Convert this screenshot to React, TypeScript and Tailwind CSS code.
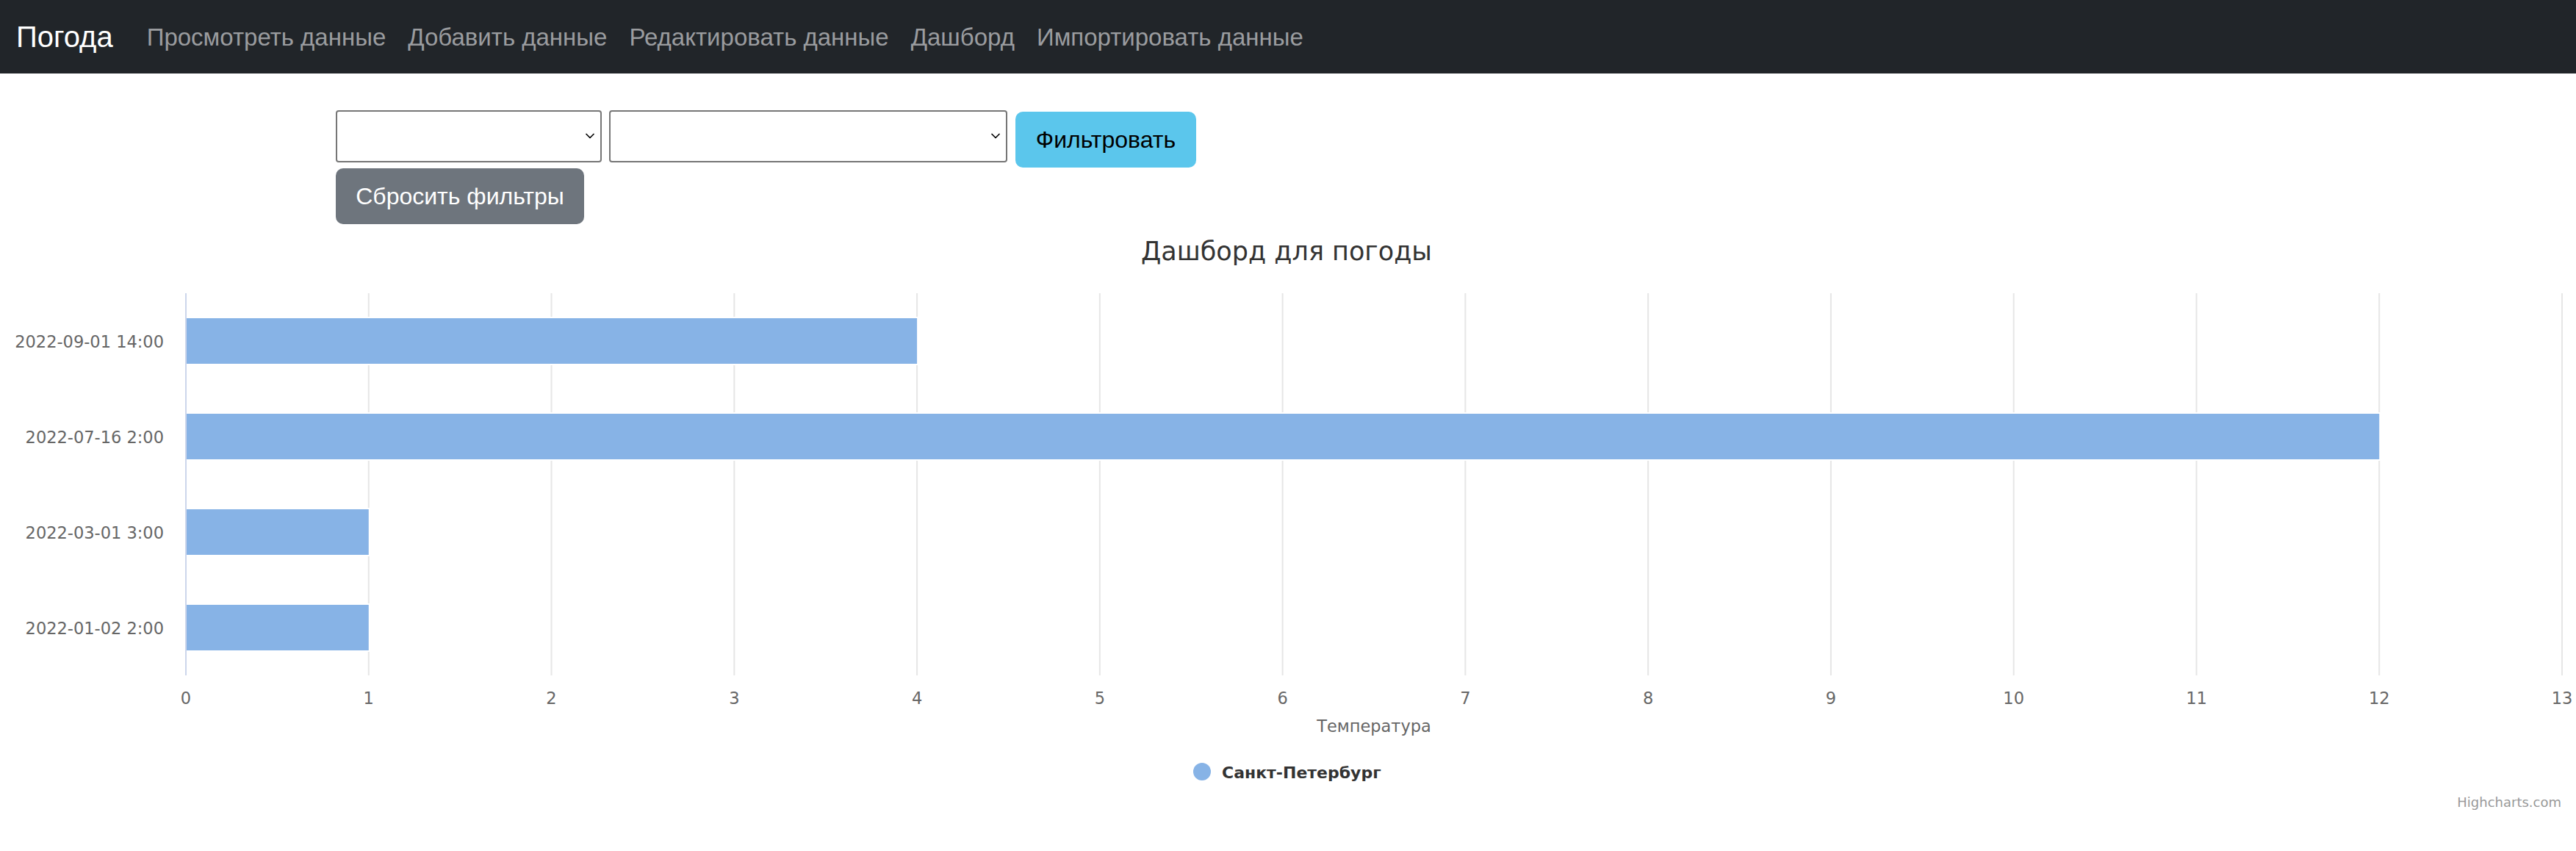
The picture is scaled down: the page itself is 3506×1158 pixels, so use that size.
import { ChevronDown } from 'lucide-react';

const navLinks = ['Просмотреть данные', 'Добавить данные', 'Редактировать данные', 'Дашборд', 'Импортировать данные'];

const rows = [
  { label: '2022-09-01 14:00', value: 4 },
  { label: '2022-07-16 2:00', value: 12 },
  { label: '2022-03-01 3:00', value: 1 },
  { label: '2022-01-02 2:00', value: 1 },
];

// plot geometry, chart coordinates (chart is 3506 x 800)
const PLOT_LEFT = 253;
const PLOT_RIGHT = 3487;
const PLOT_TOP = 94;
const BAND = 130;
const UNIT = (PLOT_RIGHT - PLOT_LEFT) / 13;
const CHART_FONT = '"DejaVu Sans", "Lucida Grande", sans-serif';

function Select({ width }: { width: string }) {
  return (
    <div className={`relative h-[71px] ${width}`}>
      <select className="h-full w-full appearance-none rounded-[4px] border-2 border-[#767676] bg-white" />
      <ChevronDown className="pointer-events-none absolute right-[6px] top-[25px] text-black" size={20} strokeWidth={2} />
    </div>
  );
}

function WeatherChart() {
  const plotBottom = PLOT_TOP + BAND * rows.length;
  const ticks = Array.from({ length: 14 }, (_, i) => i);

  return (
    <svg width="3506" height="800" viewBox="0 0 3506 800" className="block" style={{ fontFamily: CHART_FONT }}>
      <text x="1751" y="49" textAnchor="middle" fontSize="35" fill="#333333">
        Дашборд для погоды
      </text>

      {ticks.slice(1).map((i) => (
        <line key={i} x1={PLOT_LEFT + i * UNIT} x2={PLOT_LEFT + i * UNIT} y1={PLOT_TOP} y2={plotBottom} stroke="#e6e6e6" strokeWidth="2" />
      ))}

      {rows.map((r, i) => {
        const y = PLOT_TOP + i * BAND + 34;
        const w = r.value * UNIT - 1;
        return (
          <g key={r.label}>
            <rect x={PLOT_LEFT + 1} y={y - 2} width={w + 2} height={66} fill="#ffffff" />
            <rect x={PLOT_LEFT + 1} y={y} width={w} height={62} fill="#87b3e6" />
            <text x="223" y={y + 40} textAnchor="end" fontSize="22.5" fill="#666666">
              {r.label}
            </text>
          </g>
        );
      })}

      <line x1={PLOT_LEFT} x2={PLOT_LEFT} y1={PLOT_TOP} y2={plotBottom} stroke="#ccd6eb" strokeWidth="2" />

      {ticks.map((i) => (
        <text key={i} x={PLOT_LEFT + i * UNIT} y="653" textAnchor="middle" fontSize="22.5" fill="#666666">
          {i}
        </text>
      ))}

      <text x="1870" y="691" textAnchor="middle" fontSize="22.5" fill="#666666">
        Температура
      </text>

      <circle cx="1636" cy="745" r="12" fill="#87b3e6" />
      <text x="1663" y="754" fontSize="22" fontWeight="bold" fill="#333333">
        Санкт-Петербург
      </text>

      <text x="3486" y="793" textAnchor="end" fontSize="18" fill="#999999">
        Highcharts.com
      </text>
    </svg>
  );
}

export default function App() {
  return (
    <div className="min-h-[1158px] w-[3506px] bg-white font-['Liberation_Sans',Arial,sans-serif]">
      <nav className="flex h-[100px] items-center bg-[#212529] px-[22px]">
        <span className="mr-[31px] text-[40px] leading-none text-white">Погода</span>
        {navLinks.map((l) => (
          <a key={l} className="px-[15px] text-[33px] leading-none text-[#9a9c9f]">
            {l}
          </a>
        ))}
      </nav>

      <div className="mx-auto w-[2640px] px-[24px] pt-[50px]">
        <div className="flex items-start gap-[10px]">
          <Select width="w-[362px]" />
          <Select width="w-[542px]" />
          <button className="ml-[1px] mt-[2px] h-[76px] w-[246px] rounded-[10px] bg-[#5bc6ec] text-[32px] text-black">
            Фильтровать
          </button>
        </div>
        <button className="mt-[1px] h-[76px] w-[338px] rounded-[10px] bg-[#6e757d] text-[32px] text-white">
          Сбросить фильтры
        </button>
      </div>

      <WeatherChart />
    </div>
  );
}
